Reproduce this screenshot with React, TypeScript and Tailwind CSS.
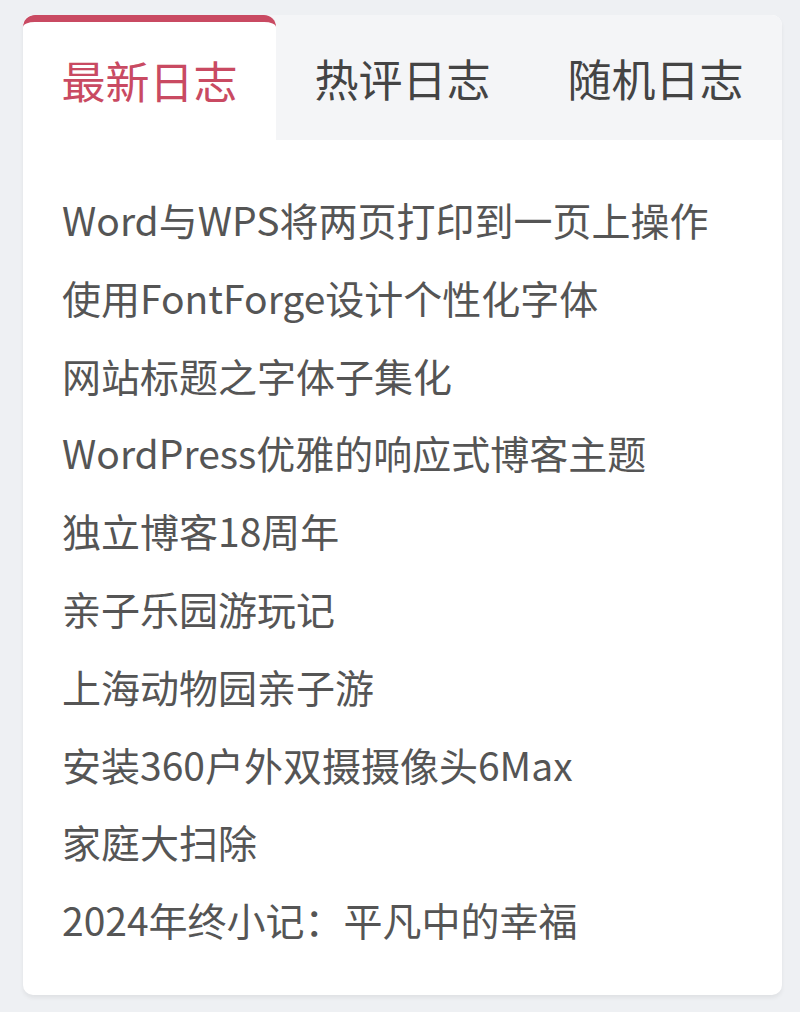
const tabs = ["最新日志", "热评日志", "随机日志"];

const posts = [
  "Word与WPS将两页打印到一页上操作",
  "使用FontForge设计个性化字体",
  "网站标题之字体子集化",
  "WordPress优雅的响应式博客主题",
  "独立博客18周年",
  "亲子乐园游玩记",
  "上海动物园亲子游",
  "安装360户外双摄摄像头6Max",
  "家庭大扫除",
  "2024年终小记：平凡中的幸福",
];

export default function App() {
  return (
    <div
      className="min-h-[1012px] bg-[#eef0f3] px-[23px] pt-[15px]"
      style={{ fontFamily: '"Noto Sans CJK SC", "Noto Sans", sans-serif' }}
    >
      <div className="w-[759px] overflow-hidden rounded-[10px] bg-white shadow-[0_3px_4px_rgba(0,0,0,0.06)]">
        <div className="flex bg-[#f4f5f7]">
          {tabs.map((tab, i) =>
            i === 0 ? (
              <div
                key={tab}
                className="flex h-[125px] w-[253px] items-center justify-center rounded-t-[12px] border-t-[7px] border-[#c94a62] bg-white pb-[3px] text-[44px] text-[#c94a62]"
              >
                {tab}
              </div>
            ) : (
              <div
                key={tab}
                className="flex h-[125px] w-[253px] items-center justify-center text-[44px] text-[#444]"
              >
                {tab}
              </div>
            )
          )}
        </div>
        <ul className="px-[39px] pb-[36px] pt-[41px]">
          {posts.map((p) => (
            <li key={p} className="text-[39px] leading-[77.8px] text-[#555]">
              {p}
            </li>
          ))}
        </ul>
      </div>
    </div>
  );
}
